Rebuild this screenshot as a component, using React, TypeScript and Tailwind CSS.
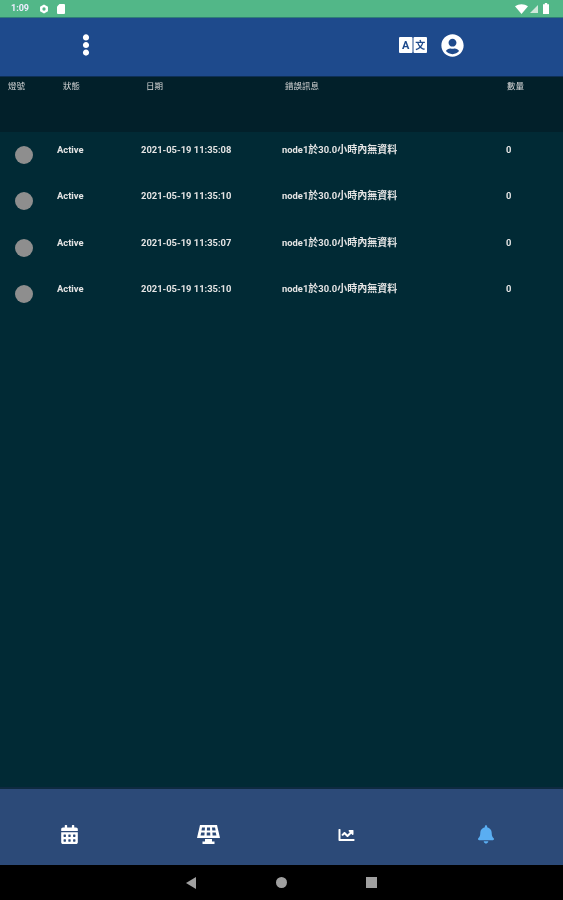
import { FaBell, FaCalendarAlt, FaChartLine, FaEllipsisV, FaUserCircle } from 'react-icons/fa';

const rows = [
  { date: '2021-05-19 11:35:08' },
  { date: '2021-05-19 11:35:10' },
  { date: '2021-05-19 11:35:07' },
  { date: '2021-05-19 11:35:10' },
];

function StatusBar() {
  return (
    <div className="h-[18px] bg-[#52b788] border-b border-[#2f7f78] flex items-center px-[11px] text-white shrink-0">
      <span className="text-[9px] font-bold w-[28px] text-[#eef]">1:09</span>
      <svg viewBox="0 0 24 24" className="w-[10px] h-[10px]" fill="white">
        <path d="M12 1l9.500 5.500v11L12 23l-9.500-5.500v-11z" />
        <circle cx="12" cy="12" r="4" fill="#52b788" />
      </svg>
      <svg viewBox="0 0 16 20" className="w-[8px] h-[10px] ml-[8px]" fill="white">
        <path d="M5 0h9a2 2 0 0 1 2 2v16a2 2 0 0 1-2 2H2a2 2 0 0 1-2-2V5z" />
      </svg>
      <div className="ml-auto flex items-center gap-[2px] pr-[3px]">
        <svg viewBox="0 0 24 18" className="w-[13px] h-[10px]" fill="white">
          <path d="M12 18L0 4c7-5.300 17-5.300 24 0z" />
        </svg>
        <svg viewBox="0 0 16 16" className="w-[8px] h-[8px]" fill="#cfe8da">
          <path d="M16 0v16H0z" />
        </svg>
        <svg viewBox="0 0 10 18" className="w-[6px] h-[11px] ml-[3px]" fill="white">
          <path d="M3 0h4v2h3v16H0V2h3z" />
        </svg>
      </div>
    </div>
  );
}

// two-panel translate glyph, A on the left and 文 on the right
function TranslateIcon() {
  return (
    <svg viewBox="0 0 28 16" className="w-[28px] h-[16px] ml-[303px]">
      <rect x="0" y="0" width="13.500" height="16" rx="1" fill="white" />
      <rect x="14.500" y="0" width="13.500" height="16" rx="1" fill="white" />
      <text x="6.750" y="12" fontSize="11" fontWeight="700" textAnchor="middle" fill="#1e4a8c">A</text>
      <text x="21.250" y="12" fontSize="10" fontWeight="700" textAnchor="middle" fill="#1e4a8c">文</text>
    </svg>
  );
}

function SolarIcon() {
  return (
    <svg viewBox="0 0 23 20" className="w-[23px] h-[20px]" fill="white">
      <path d="M3 0h17l3 13H0z" />
      <path d="M8 14h7v2.500h2.500V19h-12v-2.500H8z" />
      <g fill="#2c4a78">
        <path d="M5 2.500h3l-.2 3H4.500z" />
        <path d="M10 2.500h3l.1 3H9.900z" />
        <path d="M15 2.500h3l.6 3h-3.300z" />
        <path d="M4.200 7.500h3.400l-.2 3H3.600z" />
        <path d="M9.800 7.500h3.400l.1 3H9.700z" />
        <path d="M15.400 7.500h3.400l.6 3h-3.800z" />
      </g>
    </svg>
  );
}

function Header() {
  return (
    <div className="h-[59px] bg-[#1e4a8c] border-b border-[#0e2f55] flex items-center pb-[4px] shrink-0">
      <FaEllipsisV className="ml-[76px] w-[20px] h-[22px] text-white" />
      <TranslateIcon />
      <FaUserCircle className="ml-[14px] w-[23px] h-[23px] text-white" />
    </div>
  );
}

function TableHead() {
  return (
    <div className="h-[55px] bg-[#02202a] text-[8.500px] text-[#d8d8d8] flex pt-[3px] leading-[12px] shrink-0">
      <span className="w-[63px] pl-[8px]">燈號</span>
      <span className="w-[83px]">狀態</span>
      <span className="w-[139px]">日期</span>
      <span className="w-[222px]">錯誤訊息</span>
      <span>數量</span>
    </div>
  );
}

function Row({ date }: { date: string }) {
  return (
    <div className="h-[46.300px] flex text-[9.400px] font-bold text-[#e4e4e4] leading-[12px]">
      <div className="w-[57px] pl-[15px] pt-[14px]">
        <div className="w-[18px] h-[18px] rounded-full bg-[#8e8e8e]" />
      </div>
      <span className="w-[84px] pt-[12px]">Active</span>
      <span className="w-[141px] pt-[12px]">{date}</span>
      <span className="w-[224px] pt-[12px]">
        node1<span className="text-[10px]">於</span>30.0<span className="text-[10px]">小時內無資料</span>
      </span>
      <span className="pt-[12px]">0</span>
    </div>
  );
}

function BottomNav() {
  return (
    <div className="h-[78px] bg-[#2c4a78] border-t-2 border-[#0e2a40] pr-[8px] pt-[36px] grid grid-cols-4 items-start shrink-0">
      <div className="flex justify-center">
        <FaCalendarAlt className="w-[17px] h-[19px] text-white" />
      </div>
      <div className="flex justify-center">
        <SolarIcon />
      </div>
      <div className="flex justify-center pt-[2px]">
        <FaChartLine className="w-[19px] h-[16px] text-white" />
      </div>
      <div className="flex justify-center">
        <FaBell className="w-[16px] h-[19px] text-[#5aaef2]" />
      </div>
    </div>
  );
}

function NavBar() {
  return (
    <div className="h-[35px] bg-black flex items-center justify-center shrink-0">
      <div className="w-0 h-0 border-y-[6px] border-y-transparent border-r-[10px] border-r-[#a0a0a0]" />
      <div className="w-[11px] h-[11px] rounded-full bg-[#a0a0a0] ml-[80px]" />
      <div className="w-[11px] h-[11px] bg-[#a0a0a0] ml-[79px]" />
    </div>
  );
}

export default function App() {
  return (
    <div className="w-[563px] h-[900px] flex flex-col bg-[#012a35] overflow-hidden blur-[0.4px] font-['Roboto','Noto_Sans_CJK_TC',sans-serif]">
      <StatusBar />
      <Header />
      <TableHead />
      <div className="flex-1">
        {rows.map((row, i) => (
          <Row key={i} date={row.date} />
        ))}
      </div>
      <BottomNav />
      <NavBar />
    </div>
  );
}
